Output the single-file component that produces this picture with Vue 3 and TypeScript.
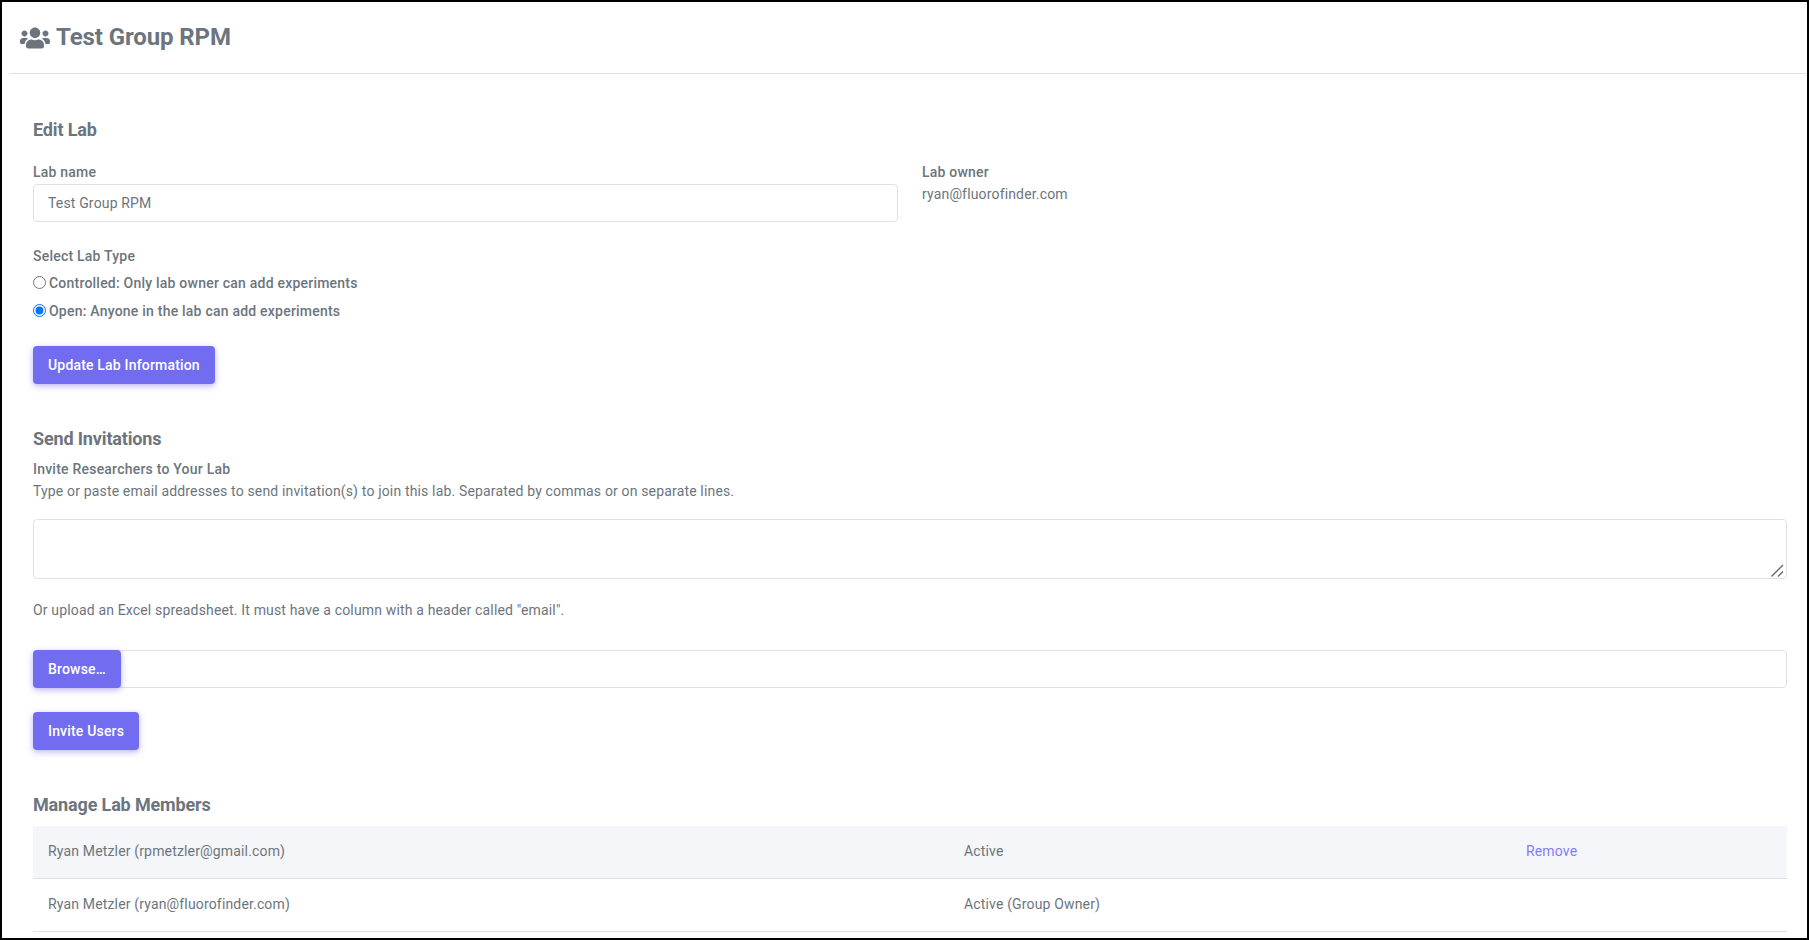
<script setup lang="ts">
interface Member { name: string; status: string; removable: boolean }
const members: Member[] = [
  { name: 'Ryan Metzler (rpmetzler@gmail.com)', status: 'Active', removable: true },
  { name: 'Ryan Metzler (ryan@fluorofinder.com)', status: 'Active (Group Owner)', removable: false },
]
</script>

<template>
  <div class="frame">
    <header class="top">
      <svg class="icon" viewBox="0 0 640 512" aria-hidden="true"><path fill="currentColor" d="M96 224c35.300 0 64-28.700 64-64s-28.700-64-64-64-64 28.700-64 64 28.700 64 64 64zm448 0c35.300 0 64-28.700 64-64s-28.700-64-64-64-64 28.700-64 64 28.700 64 64 64zm32 32h-64c-17.600 0-33.500 7.100-45.100 18.600 40.300 22.100 68.900 62 75.100 109.400h66c17.700 0 32-14.300 32-32v-32c0-35.300-28.700-64-64-64zm-256 0c61.900 0 112-50.100 112-112S381.900 32 320 32 208 82.100 208 144s50.100 112 112 112zm76.800 32h-8.300c-20.800 10-43.900 16-68.500 16s-47.600-6-68.500-16h-8.300C179.600 288 128 339.600 128 403.200V432c0 26.500 21.500 48 48 48h288c26.500 0 48-21.500 48-48v-28.800c0-63.600-51.600-115.200-115.200-115.200zm-223.700-13.400C161.500 263.100 145.600 256 128 256H64c-35.300 0-64 28.700-64 64v32c0 17.700 14.300 32 32 32h65.900c6.300-47.400 34.900-87.300 75.200-109.400z"/></svg>
      <h1>Test Group RPM</h1>
    </header>

    <main class="content">
      <h2 class="first">Edit Lab</h2>
      <div class="row">
        <div class="col-name">
          <label class="lbl">Lab name</label>
          <input class="field" type="text" value="Test Group RPM" />
        </div>
        <div class="col-owner">
          <label class="lbl">Lab owner</label>
          <div class="owner">ryan@fluorofinder.com</div>
        </div>
      </div>

      <div class="lbl type-lbl">Select Lab Type</div>
      <label class="radio"><input type="radio" name="labtype" />Controlled: Only lab owner can add experiments</label>
      <label class="radio"><input type="radio" name="labtype" checked />Open: Anyone in the lab can add experiments</label>

      <button class="btn update">Update Lab Information</button>

      <h2 class="send">Send Invitations</h2>
      <div class="lbl invite-lbl">Invite Researchers to Your Lab</div>
      <p class="help">Type or paste email addresses to send invitation(s) to join this lab. Separated by commas or on separate lines.</p>
      <div class="area-wrap">
        <textarea class="area"></textarea>
        <svg class="grip" viewBox="0 0 13 13" aria-hidden="true">
          <path d="M0.500 12.500 L12 1 M7 12.500 L12 7.500" stroke="#666" stroke-width="1.300" fill="none" />
        </svg>
      </div>
      <p class="upload">Or upload an Excel spreadsheet. It must have a column with a header called "email".</p>

      <div class="file">
        <button class="btn browse">Browse…</button>
      </div>
      <button class="btn invite">Invite Users</button>

      <h2 class="manage">Manage Lab Members</h2>
      <div class="table">
        <div v-for="(m, i) in members" :key="m.name" class="tr" :class="{ odd: i === 0 }">
          <div>{{ m.name }}</div>
          <div>{{ m.status }}</div>
          <div><a v-if="m.removable" class="remove" href="#">Remove</a></div>
        </div>
      </div>
    </main>
  </div>
</template>

<style>
html, body { margin: 0; height: 100%; overflow: hidden; background: #fff; }
</style>

<style scoped>
.frame {
  box-sizing: border-box;
  width: 1809px;
  height: 940px;
  border: 2px solid #000;
  overflow: hidden;
  background: #fff;
  font-family: Roboto, "Liberation Sans", sans-serif;
  font-size: 14px;
  line-height: 21px;
  letter-spacing: 0.16px;
  color: #6c757d;
}
.top {
  display: flex;
  align-items: center;
  gap: 6px;
  height: 72px;
  box-sizing: border-box;
  margin-left: 7px;
  padding-left: 11px;
  border-bottom: 1px solid #dee2e6;
}
.icon { width: 30px; height: 24px; display: block; }
h1 { margin: 0; font-size: 24px; font-weight: 700; line-height: 29px; letter-spacing: -0.1px; color: #6c757d; }
.content { padding: 0 20px 0 31px; }
h2 { margin: 0; font-size: 18px; line-height: 22px; font-weight: 700; letter-spacing: -0.15px; color: #6c757d; }
h2.first { margin-top: 45px; }
.row { display: flex; margin-top: 21px; }
.col-name { width: 865px; }
.col-owner { margin-left: 24px; }
.lbl { display: block; font-weight: 500; font-size: 14px; line-height: 21px; letter-spacing: 0.22px; }
.owner { margin-top: 1px; }
.field {
  display: block;
  box-sizing: border-box;
  width: 100%;
  height: 38px;
  margin-top: 1px;
  padding: 0 14px;
  border: 1px solid #dee2e6;
  border-radius: 4px;
  font: inherit;
  letter-spacing: inherit;
  color: #6c757d;
  background: #fff;
  outline: none;
}
.type-lbl { margin-top: 24px; }
.radio {
  display: flex;
  align-items: center;
  height: 28px;
  font-weight: 500;
  letter-spacing: 0.22px;
}
.radio input { width: 13px; height: 13px; margin: 0 3px 2px 0; }
.type-lbl + .radio { margin-top: 2px; }
.btn {
  display: block;
  box-sizing: border-box;
  height: 38px;
  padding: 0 15px;
  border: 0;
  border-radius: 4px;
  background: #726cf0;
  color: #fff;
  font: 500 14px/21px Roboto, "Liberation Sans", sans-serif;
  letter-spacing: 0.18px;
  box-shadow: 0 2px 6px rgba(114, 108, 240, 0.5);
}
.update { margin-top: 21px; }
h2.send { margin-top: 44px; }
.invite-lbl { margin-top: 9px; }
.help { margin: 1px 0 0; }
.area-wrap { position: relative; margin-top: 17px; }
.area {
  display: block;
  box-sizing: border-box;
  width: 100%;
  height: 60px;
  padding: 8px 14px;
  border: 1px solid #dee2e6;
  border-radius: 4px;
  font: inherit;
  outline: none;
  resize: none;
}
.grip { position: absolute; right: 3px; bottom: 2px; width: 13px; height: 13px; }
.upload { margin: 21px 0 0; }
.file {
  box-sizing: border-box;
  height: 38px;
  margin-top: 29px;
  border: 1px solid #dee2e6;
  border-radius: 4px;
}
.browse { margin: -1px 0 0 -1px; }
.invite { margin-top: 24px; }
h2.manage { margin-top: 44px; }
.table { margin-top: 10px; }
.tr {
  display: grid;
  grid-template-columns: 916px 562px 1fr;
  align-items: center;
  height: 53px;
  box-sizing: border-box;
  padding-bottom: 1px;
  border-bottom: 1px solid #dee2e6;
}
.tr > div { padding-left: 15px; }
.odd { background: #f5f6fa; }
.remove { color: #827cf5; text-decoration: none; }
</style>
